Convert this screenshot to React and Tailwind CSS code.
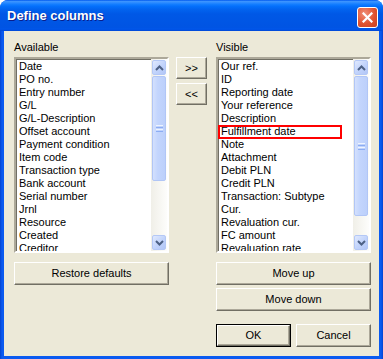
import React from "react";

const left = [
  "Date",
  "PO no.",
  "Entry number",
  "G/L",
  "G/L-Description",
  "Offset account",
  "Payment condition",
  "Item code",
  "Transaction type",
  "Bank account",
  "Serial number",
  "Jrnl",
  "Resource",
  "Created",
  "Creditor",
];

const right = [
  "Our ref.",
  "ID",
  "Reporting date",
  "Your reference",
  "Description",
  "Fulfillment date",
  "Note",
  "Attachment",
  "Debit PLN",
  "Credit PLN",
  "Transaction: Subtype",
  "Cur.",
  "Revaluation cur.",
  "FC amount",
  "Revaluation rate",
];

function Arrow({ up }) {
  return (
    <svg width="9" height="6" viewBox="0 0 9 6">
      <polyline
        points={up ? "1,5 4.5,1.5 8,5" : "1,1 4.5,4.5 8,1"}
        fill="none"
        stroke="#4d6185"
        strokeWidth="2"
      />
    </svg>
  );
}

function ScrollBtn({ up }) {
  return (
    <div className="h-[15px] w-full rounded-[2px] border border-[#b4c8f6] bg-[linear-gradient(135deg,#e0e9fe,#c1d3fb_55%,#b2c6f7)] flex items-center justify-center">
      <Arrow up={up} />
    </div>
  );
}

function ScrollBar({ thumb }) {
  return (
    <div className="w-[16px] h-full flex flex-col px-[1px] py-[1px] bg-[linear-gradient(to_right,#f0efe8,#fdfdfb)]">
      <ScrollBtn up />
      <div
        className="mt-[1px] w-full rounded-[2px] border border-[#b1c6f6] bg-[linear-gradient(to_right,#d3e0fd,#c3d5fd_40%,#bcd0fb)] flex flex-col items-center justify-center gap-[1px]"
        style={{ height: thumb }}
      >
        <div className="w-[7px] h-[1px] bg-[#eef4fe]" />
        <div className="w-[7px] h-[1px] bg-[#8cadf3]" />
        <div className="w-[7px] h-[1px] bg-[#eef4fe]" />
        <div className="w-[7px] h-[1px] bg-[#8cadf3]" />
      </div>
      <div className="flex-1" />
      <ScrollBtn />
    </div>
  );
}

function ListBox({ items, thumb, children }) {
  return (
    <div className="relative w-[155px] h-[196px] border-2 border-t-[#aca899] border-l-[#aca899] border-r-white border-b-white">
      <div className="w-full h-full flex bg-white shadow-[inset_1px_1px_#716f64]">
        <div className="flex-1 overflow-hidden pt-[1px] pl-[3px]">
          {items.map((t) => (
            <div key={t} className="h-[13px] leading-[13px] whitespace-nowrap text-black">
              {t}
            </div>
          ))}
        </div>
        <ScrollBar thumb={thumb} />
      </div>
      {children}
    </div>
  );
}

function Btn({ children, className = "", def = false }) {
  const inner = (
    <div className="w-full h-full flex items-center justify-center bg-[#ece9d8] border border-t-white border-l-white border-r-[#716f64] border-b-[#716f64] shadow-[inset_-1px_-1px_#aca899] text-black leading-none">
      {children}
    </div>
  );
  return (
    <div className={`${className} ${def ? "border border-black" : ""}`}>{inner}</div>
  );
}

export default function App() {
  return (
    <div
      className="w-[383px] h-[359px] bg-white text-[11px]"
      style={{ fontFamily: '"Liberation Sans", Arial, sans-serif' }}
    >
      <div className="w-full h-full flex flex-col rounded-t-[8px] overflow-hidden bg-[linear-gradient(to_right,#0442cf,#0a5af0_2px,#0a5af0_calc(100%-2px),#0442cf)]">
        <div className="h-[31px] shrink-0 flex items-center pl-[7px] pr-[5px] bg-[linear-gradient(to_bottom,#0058ee_0%,#3d95ff_5%,#2a8aff_9%,#137dff_14%,#0470fc_20%,#0263ef_30%,#0058e6_45%,#0054e3_88%,#0056ea_94%,#0047d6_100%)]">
          <span className="text-white font-bold text-[13px] [text-shadow:1px_1px_#0a1e8a] tracking-[0px]">
            Define columns
          </span>
          <div className="ml-auto mt-[4px] w-[21px] h-[21px] rounded-[3px] border border-white bg-[radial-gradient(circle_at_35%_30%,#f0917a,#e1522f_55%,#c8401f)] flex items-center justify-center">
            <svg width="11" height="11" viewBox="0 0 11 11">
              <path d="M1.5 1.5 L9.5 9.5 M9.5 1.5 L1.5 9.5" stroke="white" strokeWidth="2.2" strokeLinecap="square" />
            </svg>
          </div>
        </div>
        <div className="flex-1 mx-[4px] mb-[3px] bg-[#ece9d8] pt-[10px] pl-[10px] flex">
          <div className="flex flex-col w-[155px]">
            <div className="h-[13px] leading-[13px] text-black">Available</div>
            <div className="mt-[3px]">
              <ListBox items={left} thumb={105} />
            </div>
            <Btn className="mt-[9px] w-[155px] h-[23px]">Restore defaults</Btn>
          </div>
          <div className="flex flex-col ml-[7px] mt-[16px] gap-[4px]">
            <Btn className="w-[31px] h-[22px]">&gt;&gt;</Btn>
            <Btn className="w-[31px] h-[22px]">&lt;&lt;</Btn>
          </div>
          <div className="flex flex-col ml-[9px] w-[155px]">
            <div className="h-[13px] leading-[13px] text-black">Visible</div>
            <div className="mt-[3px]">
              <ListBox items={right} thumb={140}>
                <div className="absolute left-0 top-[66px] w-[124px] h-[14px] border-2 border-[#ff0000]" />
              </ListBox>
            </div>
            <Btn className="mt-[9px] w-[155px] h-[23px]">Move up</Btn>
            <Btn className="mt-[3px] w-[155px] h-[23px]">Move down</Btn>
            <div className="mt-[13px] flex gap-[5px]">
              <Btn def className="w-[75px] h-[23px]">OK</Btn>
              <Btn className="w-[75px] h-[23px]">Cancel</Btn>
            </div>
          </div>
        </div>
      </div>
    </div>
  );
}
